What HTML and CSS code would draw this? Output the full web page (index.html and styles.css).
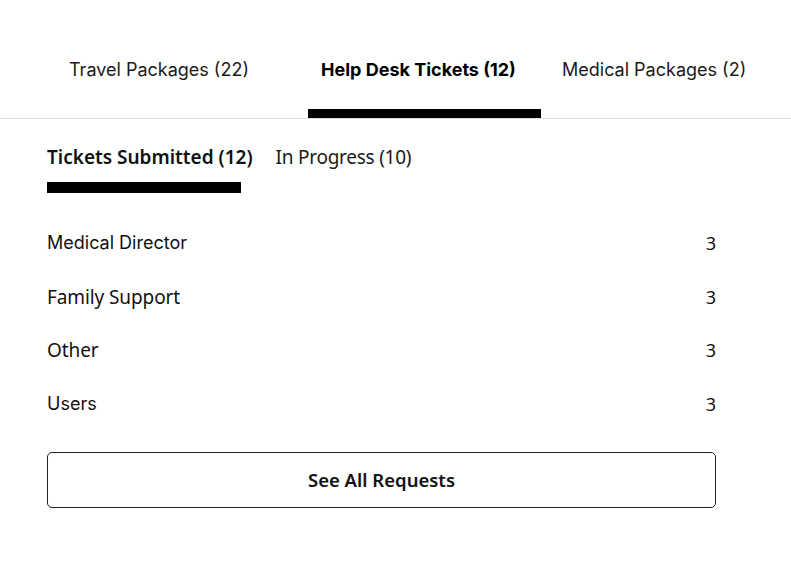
FILE: index.html
```html
<!DOCTYPE html>
<html lang="en">
<head>
<meta charset="utf-8">
<title>Help Desk</title>
<link rel="stylesheet" href="styles.css">
</head>
<body>
<nav class="tabs">
  <div class="tab tab-first">Travel Packages (22)</div>
  <div class="tab tab-active">Help Desk Tickets (12)</div>
  <div class="tab tab-last">Medical Packages (2)</div>
</nav>
<main class="panel">
  <div class="subtabs">
    <span class="subtab subtab-active">Tickets Submitted (12)</span>
    <span class="subtab">In Progress (10)</span>
  </div>
  <div class="subtab-indicator"></div>
  <ul class="list">
    <li class="row"><span class="label label-inter">Medical Director</span><span class="count">3</span></li>
    <li class="row"><span class="label">Family Support</span><span class="count">3</span></li>
    <li class="row"><span class="label">Other</span><span class="count">3</span></li>
    <li class="row"><span class="label label-inter">Users</span><span class="count">3</span></li>
  </ul>
  <button class="btn">See All Requests</button>
</main>
</body>
</html>
```
FILE: styles.css
```css
html, body {
  margin: 0;
  padding: 0;
  background: #ffffff;
  color: #111111;
}
body {
  width: 791px;
  font-family: "Noto Sans", sans-serif;
}
.tabs {
  display: flex;
  height: 119px;
  padding-left: 56px;
  border-bottom: 1px solid #dedede;
  box-sizing: border-box;
}
.tab {
  box-sizing: border-box;
  height: 118px;
  padding-top: 59px;
  font-family: "Inter", sans-serif;
  font-size: 18px;
  line-height: 22px;
  color: #1a1a1a;
  white-space: nowrap;
}
.tab-first {
  width: 252px;
  padding-left: 13px;
}
.tab-active {
  width: 233px;
  padding-left: 13px;
  font-weight: 700;
  color: #000;
  border-bottom: 9px solid #000;
}
.tab-last {
  flex: 1;
  padding-left: 21px;
}
.panel {
  padding: 0 75px 0 47px;
}
.subtabs {
  display: flex;
  gap: 23px;
  padding-top: 25px;
  font-size: 19px;
  line-height: 26px;
  letter-spacing: -0.25px;
}
.subtab {
  white-space: nowrap;
  color: #1a1a1a;
}
.subtab-active {
  font-weight: 600;
  color: #111;
  letter-spacing: 0;
}
.subtab-indicator {
  width: 194px;
  height: 11px;
  margin-top: 12px;
  background: #000;
}
.list {
  list-style: none;
  margin: 23px 0 0 0;
  padding: 0;
}
.row {
  display: flex;
  align-items: center;
  justify-content: space-between;
  height: 53.7px;
  font-size: 19px;
  letter-spacing: -0.1px;
}
.label-inter {
  font-family: "Inter", sans-serif;
  font-size: 18px;
  letter-spacing: 0;
}
.count {
  font-size: 18px;
}
.btn {
  display: block;
  width: 100%;
  height: 56px;
  margin-top: 21px;
  background: #fff;
  border: 1px solid #222;
  border-radius: 5px;
  font-family: "Noto Sans", sans-serif;
  font-size: 18.5px;
  font-weight: 600;
  letter-spacing: 0;
  color: #111;
  cursor: pointer;
}
```
